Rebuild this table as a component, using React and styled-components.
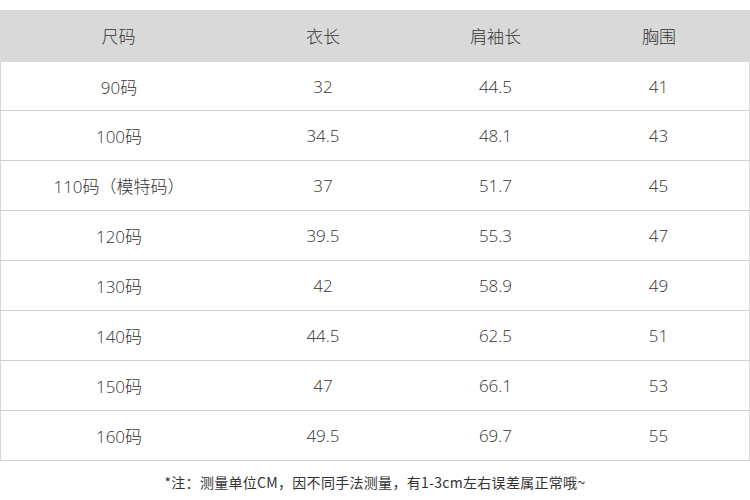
import styled, { createGlobalStyle } from 'styled-components';

const GlobalStyle = createGlobalStyle`
  html, body {
    margin: 0;
    padding: 0;
    background: #ffffff;
  }
  body {
    font-family: "Open Sans", "Noto Sans CJK SC", sans-serif;
    color: #444;
  }
`;

const Page = styled.div`
  width: 750px;
  height: 500px;
  padding-top: 10px;
  box-sizing: border-box;
  overflow: hidden;
`;

const Table = styled.div`
  display: grid;
  grid-template-columns: 237px 172px 173px 1fr;
`;

const HeadCell = styled.div`
  height: 52px;
  background: #d9d9d9;
  display: flex;
  align-items: center;
  justify-content: center;
  font-size: 17px;
  font-weight: 300;
  color: #333;
  padding-bottom: 2px;
  padding-right: ${p => (p.$last ? '14px' : '0')};
  box-sizing: border-box;
`;

const Cell = styled.div`
  height: ${p => (p.$top ? '48px' : '49px')};
  display: flex;
  align-items: center;
  justify-content: center;
  font-size: 17px;
  font-weight: 300;
  color: #333;
  border-bottom: 1px solid #cfcfcf;
  border-left: ${p => (p.$first ? '1px solid #d6d6d6' : 'none')};
  border-right: ${p => (p.$last ? '1px solid #d6d6d6' : 'none')};
  padding-right: ${p => (p.$last ? '14px' : '0')};
`;

const Note = styled.p`
  margin: 11px 0 0;
  text-align: center;
  font-family: "Noto Sans CJK SC", "Open Sans", sans-serif;
  font-size: 14px;
  font-weight: 400;
  letter-spacing: 0.3px;
  color: #333;
`;

const headers = ['尺码', '衣长', '肩袖长', '胸围'];

const rows = [
  ['90码', '32', '44.5', '41'],
  ['100码', '34.5', '48.1', '43'],
  ['110码（模特码）', '37', '51.7', '45'],
  ['120码', '39.5', '55.3', '47'],
  ['130码', '42', '58.9', '49'],
  ['140码', '44.5', '62.5', '51'],
  ['150码', '47', '66.1', '53'],
  ['160码', '49.5', '69.7', '55'],
];

export default function App() {
  return (
    <>
      <GlobalStyle />
      <Page lang="zh-CN">
        <Table>
          {headers.map((h, j) => (
            <HeadCell key={h} $last={j === headers.length - 1}>
              {h}
            </HeadCell>
          ))}
          {rows.map((r, i) =>
            r.map((v, j) => (
              <Cell
                key={i + '-' + j}
                $top={i === 0}
                $first={j === 0}
                $last={j === r.length - 1}
              >
                {v}
              </Cell>
            ))
          )}
        </Table>
        <Note>*注：测量单位CM，因不同手法测量，有1-3cm左右误差属正常哦~</Note>
      </Page>
    </>
  );
}
